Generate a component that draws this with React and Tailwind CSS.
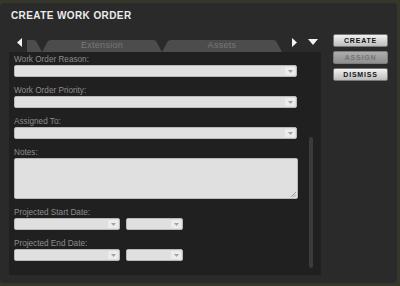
const Select = ({ width }) => (
  <div className={`flex h-[12px] ${width} rounded-[2px] border border-[#b9b9b9] bg-[#e0e0e0]`}>
    <div className="flex-1" />
    <div className="my-[1px] mr-[1px] flex w-[10px] items-center justify-center rounded-[1px] bg-[#ececec]">
      <svg width="5" height="3" viewBox="0 0 5 3">
        <path d="M0 0h5L2.5 3z" fill="#a3a3a3" />
      </svg>
    </div>
  </div>
);

const Label = ({ children }) => (
  <div className="h-[10px] text-[8.2px] leading-[10px] text-[#8d8d8d] whitespace-nowrap">{children}</div>
);

const Tab = ({ label, className = '' }) => (
  <div className={`relative h-[12px] w-[120px] shrink-0 ${className}`}>
    <svg className="absolute inset-0" width="120" height="12" viewBox="0 0 120 12">
      <path d="M0 12L5.5 1.8Q6.5 0 8.5 0H111.5Q113.5 0 114.5 1.8L120 12Z" fill="#4c4c4c" />
    </svg>
    <div className="relative text-center text-[9px] leading-[10px] tracking-[0.3px] text-[#787878]">{label}</div>
  </div>
);

const Button = ({ children, disabled }) => (
  <div
    className={`flex h-[13px] w-[55px] items-center justify-center rounded-[2px] border text-[7px] font-bold leading-none tracking-[0.8px] ${
      disabled
        ? 'border-[#7c7c7c] bg-gradient-to-b from-[#acacac] to-[#8f8f8f] text-[#747474]'
        : 'border-[#777] bg-gradient-to-b from-[#f1f1f1] to-[#bdbdbd] text-[#141414]'
    }`}
  >
    {children}
  </div>
);

export default function App() {
  return (
    <div className="h-[286px] w-[400px] bg-[#34372a] pt-[3px] pr-[3px] font-['Liberation_Sans',Arial,sans-serif]">
      <div className="flex h-[280px] w-[397px] flex-col rounded-[4px] bg-[#2a2a2a] pt-[7px]">
        <div className="h-[12px] pl-[11px] text-[10px] font-bold leading-[12px] tracking-[0.4px] text-[#ececec]">
          CREATE WORK ORDER
        </div>

        <div className="mt-[12px] flex">
          {/* left: tabs + scrolling form */}
          <div className="ml-[9px] w-[312px] pt-[4px]">
            <div className="flex h-[14px] items-start">
              <svg className="ml-[8px]" width="5" height="9" viewBox="0 0 5 9">
                <path d="M5 0V9L0 4.5Z" fill="#f2f2f2" />
              </svg>
              <div className="ml-[5px] mt-[2px] flex h-[12px] w-[262px] overflow-hidden">
                <Tab label="" className="ml-[-105px]" />
                <Tab label="Extension" />
                <Tab label="Assets" />
              </div>
              <svg className="ml-[3px]" width="5" height="9" viewBox="0 0 5 9">
                <path d="M0 0V9L5 4.5Z" fill="#f2f2f2" />
              </svg>
              <svg className="ml-[11px] mt-[1px]" width="10" height="6" viewBox="0 0 10 6">
                <path d="M0 0H10L5 6Z" fill="#f2f2f2" />
              </svg>
            </div>

            <div className="flex h-[223px] overflow-hidden bg-[#202020]">
              <div className="ml-[5px] flex w-[283px] flex-col gap-[9px] pt-[3px]">
                <div>
                  <Label>Work Order Reason:</Label>
                  <Select width="w-[283px]" />
                </div>
                <div>
                  <Label>Work Order Priority:</Label>
                  <Select width="w-[283px]" />
                </div>
                <div>
                  <Label>Assigned To:</Label>
                  <Select width="w-[283px]" />
                </div>
                <div>
                  <Label>Notes:</Label>
                  <div className="flex h-[41px] w-[284px] items-end justify-end rounded-[2px] border border-[#b9b9b9] bg-[#e0e0e0] p-[1px]">
                    <svg width="6" height="6" viewBox="0 0 6 6">
                      <path d="M1 6L6 1M3.5 6L6 3.5" stroke="#8c8c8c" strokeWidth="0.8" />
                    </svg>
                  </div>
                </div>
                <div>
                  <Label>Projected Start Date:</Label>
                  <div className="flex gap-[6px]">
                    <Select width="w-[106px]" />
                    <Select width="w-[57px]" />
                  </div>
                </div>
                <div>
                  <Label>Projected End Date:</Label>
                  <div className="flex gap-[6px]">
                    <Select width="w-[106px]" />
                    <Select width="w-[57px]" />
                  </div>
                </div>
              </div>
              <div className="ml-[12px] mt-[85px] h-[131px] w-[4px] rounded-full bg-[#3b3b3b]" />
            </div>
          </div>

          {/* right: actions */}
          <div className="ml-[12px] flex flex-col gap-[4px]">
            <Button>CREATE</Button>
            <Button disabled>ASSIGN</Button>
            <Button>DISMISS</Button>
          </div>
        </div>
      </div>
    </div>
  );
}
